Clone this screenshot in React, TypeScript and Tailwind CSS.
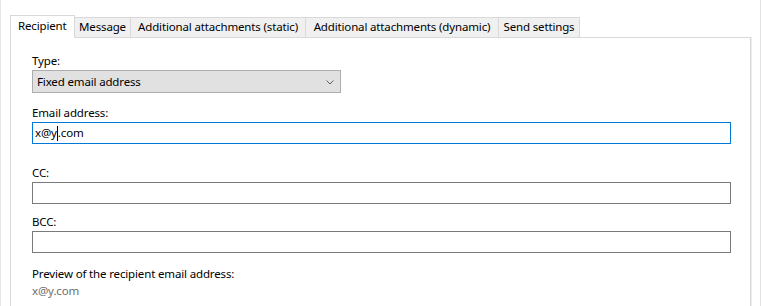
const tabs = [
  { label: 'Message', w: 'w-[57px]' },
  { label: 'Additional attachments (static)', w: 'w-[176px]' },
  { label: 'Additional attachments (dynamic)', w: 'w-[194px]' },
  { label: 'Send settings', w: 'w-[82px]' },
]

const Label = ({ text, className = '' }: { text: string; className?: string }) => (
  <div className={`h-[16px] leading-[16px] text-black ${className}`}>{text}</div>
)

const TextBox = ({ value, focused, className = '' }: { value?: string; focused?: boolean; className?: string }) => (
  <div
    className={`h-[22px] border bg-white pl-[2px] leading-[16px] pt-[2px] flex items-start ${
      focused ? 'border-[#0078d7]' : 'border-[#7a7a7a]'
    } ${className}`}
  >
    {value && (
      <>
        <span>x@y</span>
        <span className="inline-block w-px h-[15px] bg-black mt-[1px]" />
        <span>.com</span>
      </>
    )}
  </div>
)

const App = () => {
  return (
    <div
      className="w-[762px] h-[306px] bg-white overflow-hidden relative text-[11.5px] tracking-[-0.15px] text-black border-l border-[#e6e6e6]"
      style={{ fontFamily: '"Noto Sans", "Segoe UI", sans-serif' }}
    >
      <div className="absolute top-0 bottom-0 left-[759px] w-px bg-[#e3e3e3]" />
      <div className="pl-[9px] pt-[15px] w-[750px]">
        <div className="flex items-start">
          <div className="relative z-10 h-[23px] w-[65px] bg-white border border-b-0 border-[#d9d9d9] pl-[7px] leading-[20px]">
            Recipient
          </div>
          {tabs.map((t) => (
            <div
              key={t.label}
              className={`${t.w} -ml-px mt-[2px] h-[20px] bg-[#f0f0f0] border border-b-0 border-[#d9d9d9] text-center leading-[18px] whitespace-nowrap`}
            >
              {t.label}
            </div>
          ))}
        </div>
        <div className="-mt-px h-[300px] border border-[#d9d9d9] shadow-[1px_0_0_#ececec] pl-[21px] pr-[19px] pt-[15px]">
          <Label text="Type:" />
          <div className="mt-[1px] w-[309px] h-[23px] bg-[#e1e1e1] border border-[#adadad] flex items-center justify-between pl-[4px] pr-[6px]">
            <span className="leading-[16px]">Fixed email address</span>
            <svg width="8" height="5" viewBox="0 0 8 5" className="mt-[1px]">
              <path d="M0.5 0.5 L4 4 L7.5 0.5" fill="none" stroke="#606060" strokeWidth="1" />
            </svg>
          </div>

          <Label text="Email address:" className="mt-[12px]" />
          <TextBox value="x@y.com" focused className="mt-[1px]" />

          <Label text="CC:" className="mt-[21px]" />
          <TextBox className="mt-[1px]" />

          <Label text="BCC:" className="mt-[10px]" />
          <TextBox className="mt-[1px]" />

          <Label text="Preview of the recipient email address:" className="mt-[13px]" />
          <div className="mt-[1px] h-[16px] leading-[16px] text-[#6d6d6d]">x@y.com</div>
        </div>
      </div>
    </div>
  )
}

export default App
